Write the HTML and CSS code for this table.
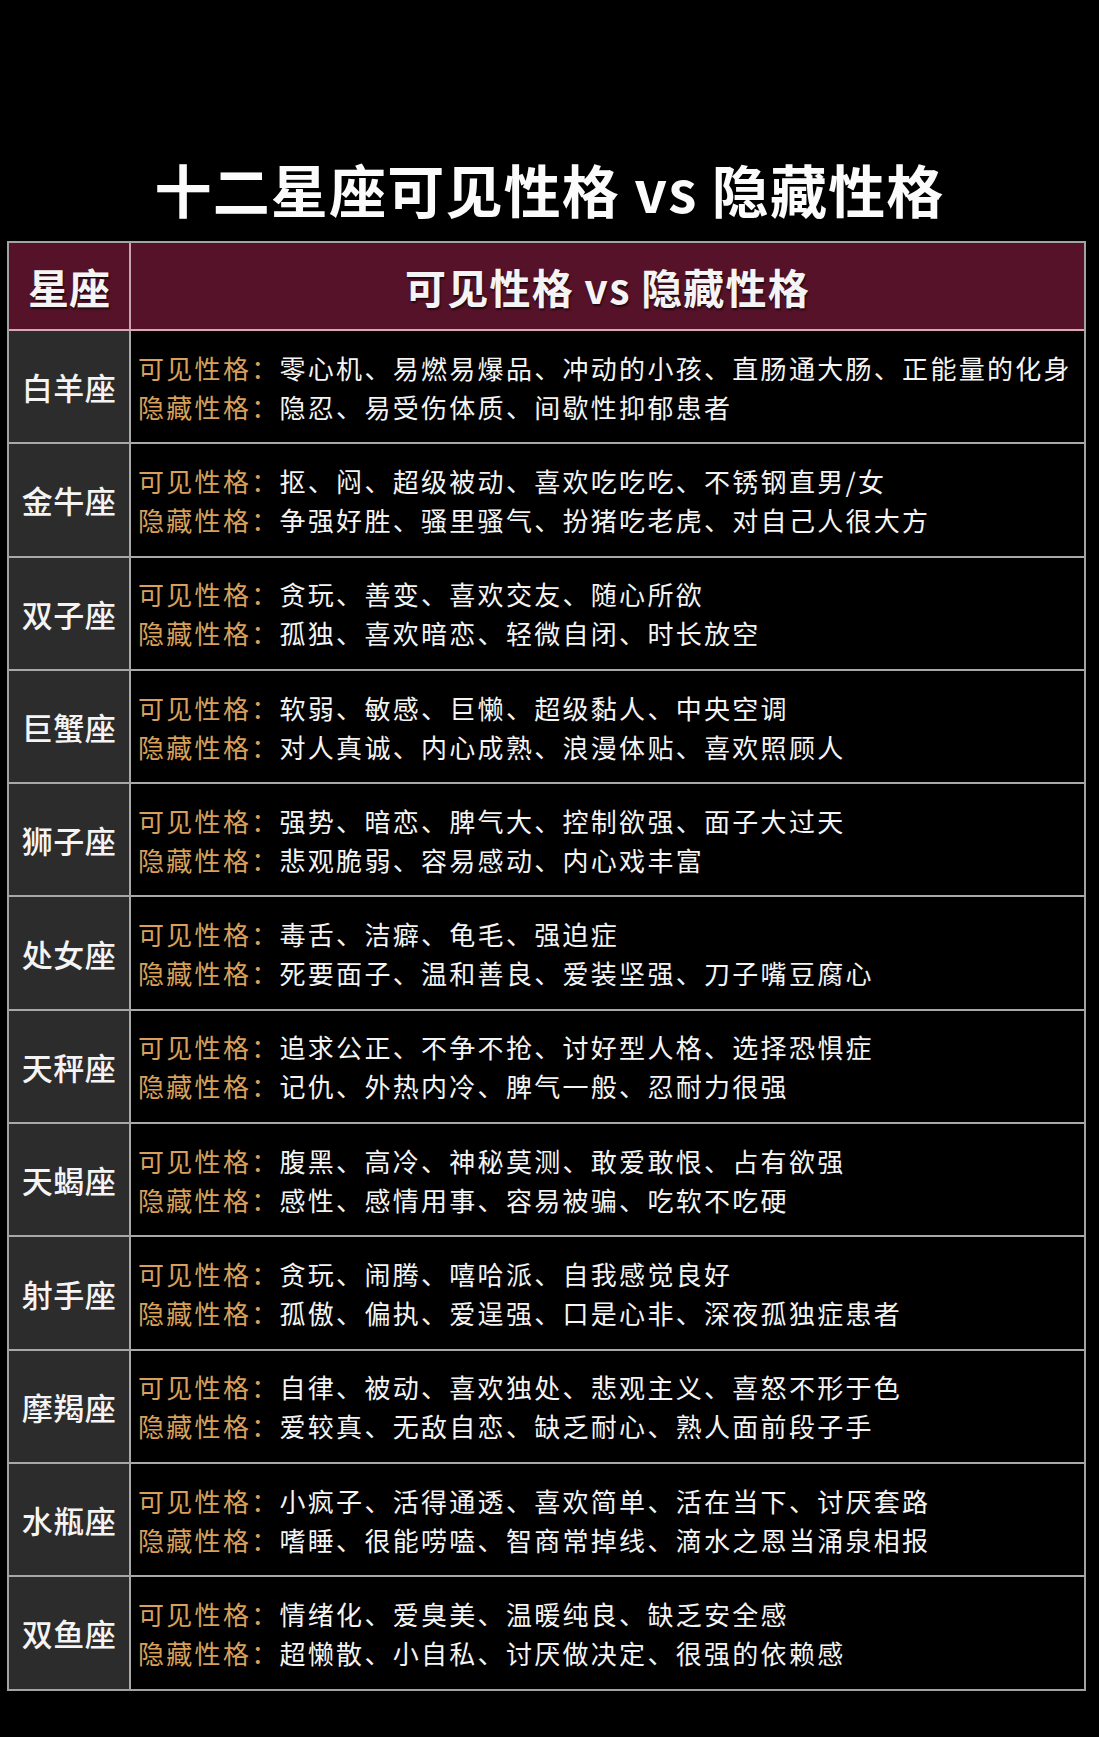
FILE: index.html
```html
<!DOCTYPE html>
<html lang="zh-CN">
<head>
<meta charset="utf-8">
<title>十二星座可见性格 vs 隐藏性格</title>
<link rel="stylesheet" href="styles.css">
</head>
<body>
<h1 class="title">十二星座可见性格 vs 隐藏性格</h1>
<div class="table">
  <div class="head">
    <div class="hname">星座</div>
    <div class="hdesc">可见性格 vs 隐藏性格</div>
  </div>
  <div class="row">
    <div class="name">白羊座</div>
    <div class="desc">
      <p><span class="lb">可见性格：</span>零心机、易燃易爆品、冲动的小孩、直肠通大肠、正能量的化身</p>
      <p><span class="lb">隐藏性格：</span>隐忍、易受伤体质、间歇性抑郁患者</p>
    </div>
  </div>
  <div class="row">
    <div class="name">金牛座</div>
    <div class="desc">
      <p><span class="lb">可见性格：</span>抠、闷、超级被动、喜欢吃吃吃、不锈钢直男/女</p>
      <p><span class="lb">隐藏性格：</span>争强好胜、骚里骚气、扮猪吃老虎、对自己人很大方</p>
    </div>
  </div>
  <div class="row">
    <div class="name">双子座</div>
    <div class="desc">
      <p><span class="lb">可见性格：</span>贪玩、善变、喜欢交友、随心所欲</p>
      <p><span class="lb">隐藏性格：</span>孤独、喜欢暗恋、轻微自闭、时长放空</p>
    </div>
  </div>
  <div class="row">
    <div class="name">巨蟹座</div>
    <div class="desc">
      <p><span class="lb">可见性格：</span>软弱、敏感、巨懒、超级黏人、中央空调</p>
      <p><span class="lb">隐藏性格：</span>对人真诚、内心成熟、浪漫体贴、喜欢照顾人</p>
    </div>
  </div>
  <div class="row">
    <div class="name">狮子座</div>
    <div class="desc">
      <p><span class="lb">可见性格：</span>强势、暗恋、脾气大、控制欲强、面子大过天</p>
      <p><span class="lb">隐藏性格：</span>悲观脆弱、容易感动、内心戏丰富</p>
    </div>
  </div>
  <div class="row">
    <div class="name">处女座</div>
    <div class="desc">
      <p><span class="lb">可见性格：</span>毒舌、洁癖、龟毛、强迫症</p>
      <p><span class="lb">隐藏性格：</span>死要面子、温和善良、爱装坚强、刀子嘴豆腐心</p>
    </div>
  </div>
  <div class="row">
    <div class="name">天秤座</div>
    <div class="desc">
      <p><span class="lb">可见性格：</span>追求公正、不争不抢、讨好型人格、选择恐惧症</p>
      <p><span class="lb">隐藏性格：</span>记仇、外热内冷、脾气一般、忍耐力很强</p>
    </div>
  </div>
  <div class="row">
    <div class="name">天蝎座</div>
    <div class="desc">
      <p><span class="lb">可见性格：</span>腹黑、高冷、神秘莫测、敢爱敢恨、占有欲强</p>
      <p><span class="lb">隐藏性格：</span>感性、感情用事、容易被骗、吃软不吃硬</p>
    </div>
  </div>
  <div class="row">
    <div class="name">射手座</div>
    <div class="desc">
      <p><span class="lb">可见性格：</span>贪玩、闹腾、嘻哈派、自我感觉良好</p>
      <p><span class="lb">隐藏性格：</span>孤傲、偏执、爱逞强、口是心非、深夜孤独症患者</p>
    </div>
  </div>
  <div class="row">
    <div class="name">摩羯座</div>
    <div class="desc">
      <p><span class="lb">可见性格：</span>自律、被动、喜欢独处、悲观主义、喜怒不形于色</p>
      <p><span class="lb">隐藏性格：</span>爱较真、无敌自恋、缺乏耐心、熟人面前段子手</p>
    </div>
  </div>
  <div class="row">
    <div class="name">水瓶座</div>
    <div class="desc">
      <p><span class="lb">可见性格：</span>小疯子、活得通透、喜欢简单、活在当下、讨厌套路</p>
      <p><span class="lb">隐藏性格：</span>嗜睡、很能唠嗑、智商常掉线、滴水之恩当涌泉相报</p>
    </div>
  </div>
  <div class="row">
    <div class="name">双鱼座</div>
    <div class="desc">
      <p><span class="lb">可见性格：</span>情绪化、爱臭美、温暖纯良、缺乏安全感</p>
      <p><span class="lb">隐藏性格：</span>超懒散、小自私、讨厌做决定、很强的依赖感</p>
    </div>
  </div>
</div>
</body>
</html>
```
FILE: styles.css
```css
html, body {
  margin: 0;
  padding: 0;
  background: #000;
}
body {
  width: 1099px;
  min-height: 1737px;
  font-family: "Noto Sans CJK SC", "Noto Sans", sans-serif;
  color: #f4f4f4;
}
.title {
  margin: 0;
  padding-top: 160px;
  height: 60px;
  font-size: 57px;
  line-height: 57px;
  font-weight: 700;
  text-align: center;
  color: #fbfbfb;
  letter-spacing: 1.2px;
}
.table {
  margin: 21px 0 0 7px;
  width: 1075px;
  border: 2px solid #a3a3a3;
}
.head {
  display: flex;
  height: 86px;
  background: #561229;
  border-bottom: 2px solid #d4a8b8;
}
.hname {
  width: 120px;
  border-right: 2px solid #c9a3b2;
  display: flex;
  align-items: center;
  justify-content: center;
  font-size: 41px;
  font-weight: 700;
  text-shadow: 1px 2px 2px rgba(0,0,0,0.6);
}
.hdesc {
  flex: 1;
  display: flex;
  align-items: center;
  justify-content: center;
  font-size: 41px;
  font-weight: 700;
  letter-spacing: 1.2px;
  text-shadow: 1px 2px 2px rgba(0,0,0,0.6);
}
.row {
  display: flex;
  height: 111.3px;
  border-bottom: 2px solid #a8a8a8;
}
.row:last-child {
  border-bottom: none;
}
.name {
  width: 120px;
  border-right: 2px solid #a8a8a8;
  background: #2c2c2c;
  display: flex;
  align-items: center;
  justify-content: center;
  font-size: 31px;
  font-weight: 500;
  letter-spacing: 0.5px;
}
.desc {
  flex: 1;
  display: flex;
  flex-direction: column;
  justify-content: center;
  padding-left: 7px;
}
.desc p {
  margin: 0;
  font-size: 26px;
  line-height: 39px;
  letter-spacing: 2.3px;
  white-space: nowrap;
}
.lb {
  color: #d8a05a;
}
```
